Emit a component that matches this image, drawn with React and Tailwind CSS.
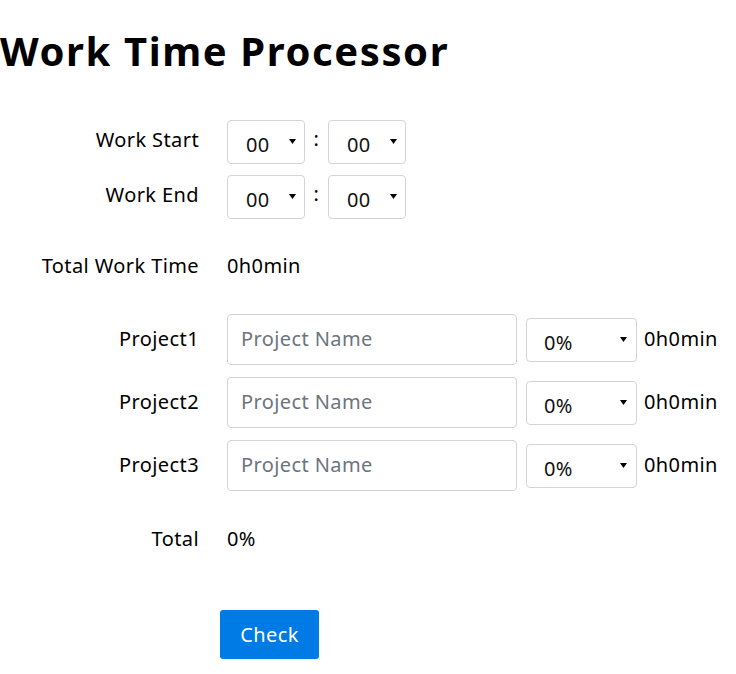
import React, { useState } from 'react';

// Small black triangle used by the selects (the page hides the native arrow)
const Arrow = ({ right }) => (
  <svg
    className={`pointer-events-none absolute top-1/2 -translate-y-[3px] ${right}`}
    width="7"
    height="5"
    viewBox="0 0 7 5"
  >
    <path d="M0 0H7L3.5 5Z" fill="#000" />
  </svg>
);

const hours = Array.from({ length: 24 }, (_, i) => String(i).padStart(2, '0'));
const minutes = Array.from({ length: 60 }, (_, i) => String(i).padStart(2, '0'));
const percents = Array.from({ length: 11 }, (_, i) => `${i * 10}%`);

const TimeSelect = ({ options, value, onChange }) => (
  <div className="relative">
    <select
      value={value}
      onChange={(e) => onChange(e.target.value)}
      className="appearance-none w-[78px] h-[44px] pl-[18px] pt-[6px] border border-[#d4d4d4] rounded-[4px] bg-white text-[20px] tracking-[0.4px] text-[#111] outline-none"
    >
      {options.map((o) => (
        <option key={o}>{o}</option>
      ))}
    </select>
    <Arrow right="right-[9px]" />
  </div>
);

const TimeRow = ({ label, h, m, setH, setM }) => (
  <div className="grid grid-cols-[200px_1fr] gap-x-[27px] items-center h-[44px]">
    <div className="text-right pr-px -mt-[4px]">{label}</div>
    <div className="flex items-center">
      <TimeSelect options={hours} value={h} onChange={setH} />
      <span className="w-[23px] text-center -mt-[6px]">:</span>
      <TimeSelect options={minutes} value={m} onChange={setM} />
    </div>
  </div>
);

const ProjectRow = ({ index }) => {
  const [pct, setPct] = useState('0%');
  return (
    <div className="grid grid-cols-[200px_1fr] gap-x-[27px] items-center h-[51px]">
      <div className="text-right pr-px -mt-[2px]">Project{index}</div>
      <div className="flex items-center">
        <input
          type="text"
          placeholder="Project Name"
          className="w-[290px] h-[51px] px-[13px] pb-[2px] border border-[#d4d4d4] rounded-[4px] text-[20px] tracking-[0.4px] outline-none placeholder:text-[#6c757d]"
        />
        <div className="relative ml-[9px]">
          <select
            value={pct}
            onChange={(e) => setPct(e.target.value)}
            className="appearance-none w-[111px] h-[44px] pl-[17px] pt-[6px] border border-[#d4d4d4] rounded-[4px] bg-white text-[20px] tracking-[0.4px] text-[#111] outline-none"
          >
            {percents.map((p) => (
              <option key={p}>{p}</option>
            ))}
          </select>
          <Arrow right="right-[10px]" />
        </div>
        <span className="ml-[7px] -mt-[2px]">0h0min</span>
      </div>
    </div>
  );
};

export default function App() {
  const [start, setStart] = useState({ h: '00', m: '00' });
  const [end, setEnd] = useState({ h: '00', m: '00' });

  return (
    <div className="font-['Noto_Sans',sans-serif] text-[20px] tracking-[0.4px] text-black bg-white min-h-[674px]">
      <h1 className="text-[40px] leading-[48px] font-bold tracking-[1.6px] pt-[27px]">Work Time Processor</h1>

      <div className="mt-[45px] flex flex-col gap-[11px]">
        <TimeRow
          label="Work Start"
          h={start.h}
          m={start.m}
          setH={(h) => setStart({ ...start, h })}
          setM={(m) => setStart({ ...start, m })}
        />
        <TimeRow
          label="Work End"
          h={end.h}
          m={end.m}
          setH={(h) => setEnd({ ...end, h })}
          setM={(m) => setEnd({ ...end, m })}
        />
      </div>

      <div className="mt-[25px] grid grid-cols-[200px_1fr] gap-x-[27px] items-center h-[44px]">
        <div className="text-right pr-px">Total Work Time</div>
        <div>0h0min</div>
      </div>

      <div className="mt-[26px] flex flex-col gap-[12px]">
        <ProjectRow index={1} />
        <ProjectRow index={2} />
        <ProjectRow index={3} />
      </div>

      <div className="mt-[26px] grid grid-cols-[200px_1fr] gap-x-[27px] items-center h-[44px]">
        <div className="text-right pr-px">Total</div>
        <div>0%</div>
      </div>

      <div className="mt-[49px] pl-[220px]">
        <button className="w-[99px] h-[49px] rounded-[3px] bg-[#007be6] text-white text-[20px]">
          Check
        </button>
      </div>
    </div>
  );
}
